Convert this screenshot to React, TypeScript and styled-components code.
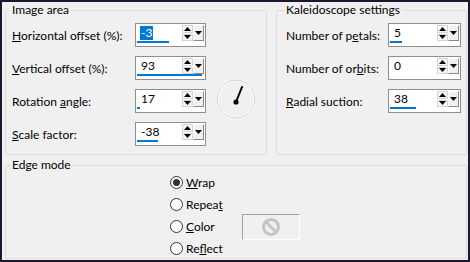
import React from "react";
import styled, { createGlobalStyle } from "styled-components";

const Global = createGlobalStyle`
  html, body { margin: 0; padding: 0; background: #f0f0f0; }
  body { font-family: Lato, "Open Sans", sans-serif; }
`;

const FONT = `Lato, "Open Sans", "Noto Sans", sans-serif`;

const Frame = styled.div`
  box-sizing: border-box;
  width: 470px;
  height: 262px;
  border: 2px solid #1c1631;
  background: #f0f0f0;
  padding: 1px 1px 1px 3px;
  display: flex;
  flex-direction: column;
  align-items: flex-start;
  gap: 3px;
  font-family: ${FONT};
  font-size: 12px;
  color: #000;
`;

const TopRow = styled.div`
  display: flex;
  gap: 9px;
`;

const Group = styled.fieldset<{ $w: number; $h: number }>`
  box-sizing: border-box;
  margin: 0;
  padding: 0;
  min-width: 0;
  width: ${(p) => p.$w}px;
  height: ${(p) => p.$h}px;
  flex: none;
  border: 1px solid #dcdcdc;
  border-radius: 2px;
`;

const Legend = styled.legend<{ $ml: number }>`
  margin-left: ${(p) => p.$ml}px;
  padding: 0 2px;
  line-height: 14px;
  font-size: 12px;
`;

const FieldGrid = styled.div<{ $pl: number; $cols: string }>`
  display: grid;
  grid-template-columns: ${(p) => p.$cols};
  grid-auto-rows: 24px;
  row-gap: 9px;
  padding: 6px 0 0 ${(p) => p.$pl}px;
  align-items: center;
`;

const Label = styled.span`
  white-space: nowrap;
`;

const Key = styled.span`
  text-decoration: underline;
  text-underline-offset: 1px;
`;

const SpinBox = styled.div<{ $w: number }>`
  box-sizing: border-box;
  width: ${(p) => p.$w}px;
  height: 24px;
  border: 1px solid #8f8f8f;
  background: #fff;
  display: flex;
  flex-direction: column;
  padding: 0 1px 3px 1px;
`;

const SpinMain = styled.div`
  display: flex;
  height: 17px;
`;

const Field = styled.div`
  flex: 1;
  display: flex;
  align-items: center;
  padding-left: 3px;
`;

const Value = styled.span<{ $selected?: boolean }>`
  line-height: 14px;
  padding: 0 1px;
  background: ${(p) => (p.$selected ? "#0078d7" : "transparent")};
  color: ${(p) => (p.$selected ? "#fff" : "#000")};
`;

const Arrows = styled.div`
  width: 11px;
  display: flex;
  flex-direction: column;
  gap: 1px;
  padding-top: 1px;
  box-sizing: border-box;
`;

const ArrowHalf = styled.div`
  flex: 1;
  box-sizing: border-box;
  border: 1px solid #d4d4d4;
  background: #f6f6f6;
  display: flex;
  align-items: center;
  justify-content: center;
`;

const DropButton = styled.div`
  width: 11px;
  box-sizing: border-box;
  margin-top: 1px;
  background: #f0f0f0;
  border-top: 1px solid #fff;
  border-left: 1px solid #fff;
  border-right: 1px solid #8a8a8a;
  border-bottom: 1px solid #8a8a8a;
  display: flex;
  align-items: center;
  justify-content: center;
`;

const Bar = styled.div`
  height: 2px;
  background: #0078d7;
`;

const DialWrap = styled.div`
  justify-self: start;
  align-self: start;
  margin: -10px 0 0 10px;
  width: 40px;
  height: 40px;
`;

const RadioGrid = styled.div`
  display: grid;
  grid-template-columns: 72px auto;
  grid-auto-rows: 22px;
  margin-top: -1px;
  padding-left: 164px;
  align-items: center;
`;

const RadioItem = styled.label<{ $row: number }>`
  grid-column: 1;
  grid-row: ${(p) => p.$row};
  display: flex;
  align-items: center;
  gap: 3px;
  white-space: nowrap;
`;

const RadioCircle = styled.span<{ $checked?: boolean }>`
  box-sizing: border-box;
  width: 13px;
  height: 13px;
  border-radius: 50%;
  border: 1px solid #333;
  background: #fff;
  display: flex;
  align-items: center;
  justify-content: center;
  &::after {
    content: "";
    width: 7px;
    height: 7px;
    border-radius: 50%;
    background: ${(p) => (p.$checked ? "#333" : "transparent")};
  }
`;

const ColorBox = styled.div`
  grid-column: 2;
  grid-row: 3;
  align-self: start;
  margin-top: -1px;
  box-sizing: border-box;
  width: 58px;
  height: 26px;
  border-top: 1px solid #a0a0a0;
  border-left: 1px solid #a0a0a0;
  border-right: 1px solid #fff;
  border-bottom: 1px solid #fff;
  display: flex;
  align-items: center;
  justify-content: center;
`;

const Tri = ({ up }: { up?: boolean }) => (
  <svg width="7" height="4" viewBox="0 0 7 4">
    {up ? <polygon points="0,4 7,4 3.5,0" fill="#000" /> : <polygon points="0,0 7,0 3.5,4" fill="#000" />}
  </svg>
);

type SpinProps = {
  value: number;
  min: number;
  max: number;
  width: number;
  selected?: boolean;
};

const Spin = ({ value, min, max, width, selected }: SpinProps) => {
  const inner = width - 4;
  const frac = Math.max(0, Math.min(1, (value - min) / (max - min)));
  return (
    <SpinBox $w={width}>
      <SpinMain>
        <Field>
          <Value $selected={selected}>{value}</Value>
        </Field>
        <Arrows>
          <ArrowHalf>
            <Tri up />
          </ArrowHalf>
          <ArrowHalf>
            <Tri />
          </ArrowHalf>
        </Arrows>
        <DropButton>
          <Tri />
        </DropButton>
      </SpinMain>
      <Bar style={{ width: `${Math.round(inner * frac)}px` }} />
    </SpinBox>
  );
};

const Dial = () => (
  <DialWrap>
    <svg width="40" height="40" viewBox="0 0 40 40">
      <circle cx="20" cy="20" r="19" fill="none" stroke="#ffffff" strokeWidth="2.5" />
      <circle cx="20" cy="20" r="19" fill="none" stroke="#cbcbcb" strokeWidth="1" />
      <line x1="20" y1="23" x2="26" y2="8" stroke="#000" strokeWidth="2" strokeLinecap="round" />
      <circle cx="20" cy="23" r="2.6" fill="#000" />
    </svg>
  </DialWrap>
);

const NoSymbol = () => (
  <svg width="22" height="22" viewBox="0 0 22 22">
    <circle cx="11" cy="11" r="7.5" fill="none" stroke="#c4c4c4" strokeWidth="3" />
    <line x1="5.7" y1="5.7" x2="16.3" y2="16.3" stroke="#c4c4c4" strokeWidth="3" />
  </svg>
);

export default function App() {
  return (
    <>
      <Global />
      <Frame>
        <TopRow>
          <Group $w={262} $h={152}>
            <Legend $ml={4}>Image area</Legend>
            <FieldGrid $pl={6} $cols="123px 71px 1fr">
              <Label>
                <Key>H</Key>orizontal offset (%):
              </Label>
              <Spin value={-3} min={-100} max={100} width={71} selected />
              <span />
              <Label>
                <Key>V</Key>ertical offset (%):
              </Label>
              <Spin value={93} min={-100} max={100} width={71} />
              <span />
              <Label>
                Rotation <Key>a</Key>ngle:
              </Label>
              <Spin value={17} min={0} max={360} width={71} />
              <Dial />
              <Label>
                <Key>S</Key>cale factor:
              </Label>
              <Spin value={-38} min={-100} max={100} width={71} />
              <span />
            </FieldGrid>
          </Group>
          <Group $w={191} $h={152}>
            <Legend $ml={7}>Kaleidoscope settings</Legend>
            <FieldGrid $pl={9} $cols="102px 73px">
              <Label>
                Number of p<Key>e</Key>tals:
              </Label>
              <Spin value={5} min={1} max={25} width={73} />
              <Label>
                Number of or<Key>b</Key>its:
              </Label>
              <Spin value={0} min={0} max={100} width={73} />
              <Label>
                <Key>R</Key>adial suction:
              </Label>
              <Spin value={38} min={0} max={100} width={73} />
            </FieldGrid>
          </Group>
        </TopRow>
        <Group $w={462} $h={101}>
          <Legend $ml={4}>Edge mode</Legend>
          <RadioGrid>
            <RadioItem $row={1}>
              <RadioCircle $checked />
              <span>
                <Key>W</Key>rap
              </span>
            </RadioItem>
            <RadioItem $row={2}>
              <RadioCircle />
              <span>
                Repea<Key>t</Key>
              </span>
            </RadioItem>
            <RadioItem $row={3}>
              <RadioCircle />
              <span>
                <Key>C</Key>olor
              </span>
            </RadioItem>
            <RadioItem $row={4}>
              <RadioCircle />
              <span>
                Re<Key>f</Key>lect
              </span>
            </RadioItem>
            <ColorBox>
              <NoSymbol />
            </ColorBox>
          </RadioGrid>
        </Group>
      </Frame>
    </>
  );
}
